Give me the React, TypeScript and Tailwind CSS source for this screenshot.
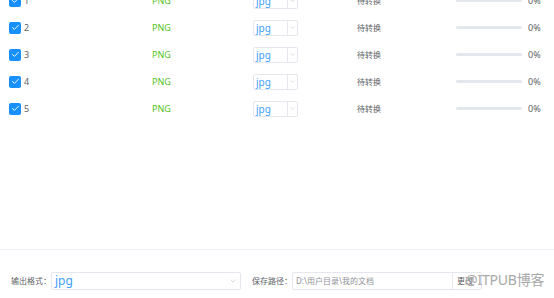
import { Check, ChevronDown } from 'lucide-react';

const rows = [1, 2, 3, 4, 5];

function Row({ n }: { n: number }) {
    return (
        <div className="flex h-[27px] items-center whitespace-nowrap text-[9px] text-[#606266]">
            <div className="flex w-[152px] items-center pl-[9px]">
                <span className="flex h-[12px] w-[12px] items-center justify-center rounded-[2px] bg-[#1890ff]">
                    <Check size={9} strokeWidth={2.5} className="text-white" />
                </span>
                <span className="ml-[3px]">{n}</span>
            </div>
            <div className="w-[101px] text-[#52c41a]">PNG</div>
            <div className="w-[104px]">
                <div className="flex h-[16px] w-[45px] items-center rounded-[2px] border border-[#e4e7ed] bg-white">
                    <span className="flex-1 pl-[2px] text-[10px] leading-none text-[#409eff]">jpg</span>
                    <span className="flex h-full w-[10px] items-center justify-center border-l border-[#e4e7ed]">
                        <ChevronDown size={7} className="text-[#c0c4cc]" />
                    </span>
                </div>
            </div>
            <div className="w-[99px] text-[8px]">待转换</div>
            <div className="h-[3px] w-[66px] rounded-full bg-[#e4e7ed]" />
            <div className="ml-[6px]">0%</div>
        </div>
    );
}

export default function App() {
    return (
        <div
            className="relative flex h-[298px] w-[554px] flex-col overflow-hidden bg-white"
            style={{ fontFamily: '"Noto Sans", "Noto Sans CJK SC", sans-serif' }}
        >
            <div className="-mt-[13px] flex-1">
                {rows.map((n) => (
                    <Row key={n} n={n} />
                ))}
            </div>

            {/* Footer */}
            <div className="h-[49px] border-t border-[#ebeef5] pt-[22px]">
                <div className="flex items-center whitespace-nowrap text-[8px] text-[#606266]">
                    <span className="ml-[11px] w-[40px]">输出格式：</span>
                    <div className="flex h-[18px] w-[190px] items-center rounded-[2px] border border-[#e4e7ed]">
                        <span className="flex-1 pl-[3px] text-[12px] leading-none text-[#409eff]">jpg</span>
                        <ChevronDown size={8} className="mr-[3px] text-[#c0c4cc]" />
                    </div>
                    <span className="ml-[11px] w-[40px]">保存路径：</span>
                    <div className="flex h-[18px] w-[190px] items-center rounded-[2px] border border-[#e4e7ed]">
                        <span className="flex-1 truncate pl-[3px] text-[8px] text-[#909399]">D:\用户目录\我的文档</span>
                        <span className="flex h-full w-[29px] items-center border-l border-[#e4e7ed] pl-[4px] text-[8px] text-[#606266]">
                            更改
                        </span>
                    </div>
                </div>
            </div>

            <div className="absolute left-[465px] top-[273px] whitespace-nowrap text-[14px] leading-none tracking-[-0.2px] text-[#a8a8a8]">
                @ITPUB博客
            </div>
        </div>
    );
}
